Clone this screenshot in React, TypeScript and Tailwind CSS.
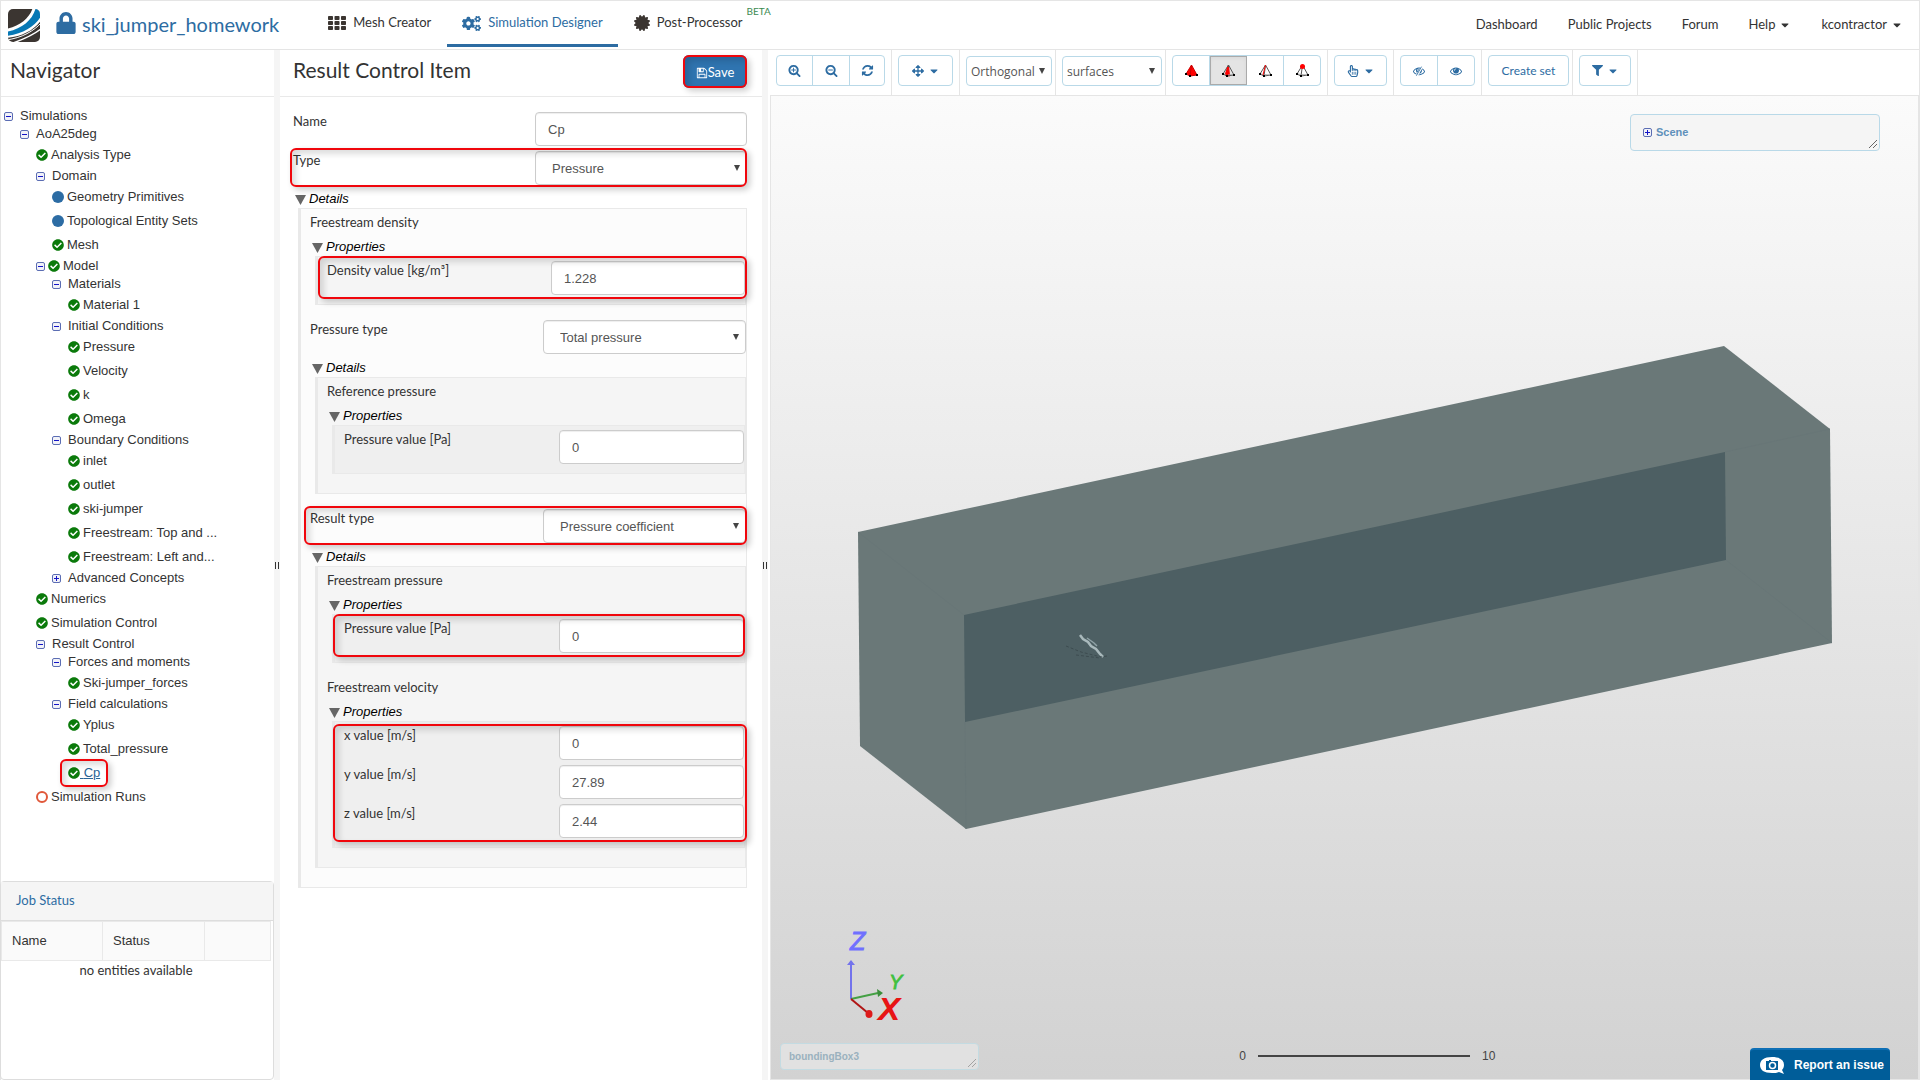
import type { ReactNode } from "react";
import { FaArrowsAlt, FaCaretDown, FaCertificate, FaCheckCircle, FaCogs, FaFilter, FaLock, FaRegHandPointer } from "react-icons/fa";

const paths = {
  plus: "M1088 800v64q0 13-9.5 22.5t-22.5 9.5h-224v224q0 13-9.5 22.5t-22.5 9.5h-64q-13 0-22.5-9.5t-9.5-22.5v-224h-224q-13 0-22.5-9.5t-9.5-22.5v-64q0-13 9.5-22.5t22.5-9.5h224v-224q0-13 9.5-22.5t22.5-9.5h64q13 0 22.5 9.5t9.5 22.5v224h224q13 0 22.5 9.5t9.5 22.5z",
  minus: "M1088 800v64q0 13-9.5 22.5t-22.5 9.5h-576q-13 0-22.5-9.5t-9.5-22.5v-64q0-13 9.5-22.5t22.5-9.5h576q13 0 22.5 9.5t9.5 22.5z",
  lens: "M1216 832q0-185-131.5-316.5t-316.5-131.5-316.5 131.5-131.5 316.5 131.5 316.5 316.5 131.5 316.5-131.5 131.5-316.5zm512 832q0 53-37.5 90.5t-90.5 37.5q-54 0-90-38l-343-342q-179 124-399 124-143 0-273.5-55.5t-225-150-150-225-55.5-273.5 55.5-273.5 150-225 225-150 273.5-55.5 273.5 55.5 225 150 150 225 55.5 273.5q0 220-124 399l343 343q37 37 37 90z",
  refresh: "M1639 1056q0 5-1 7-64 268-268 434.5t-478 166.5q-146 0-282.5-55t-243.5-157l-129 129q-19 19-45 19t-45-19-19-45v-448q0-26 19-45t45-19h448q26 0 45 19t19 45-19 45l-137 137q71 66 161 102t187 36q134 0 250-65t186-179q11-17 53-117 8-23 30-23h192q13 0 22.5 9.5t9.5 22.5zm25-800v448q0 26-19 45t-45 19h-448q-26 0-45-19t-19-45 19-45l138-138q-148-137-349-137-134 0-250 65t-186 179q-11 17-53 117-8 23-30 23h-199q-13 0-22.5-9.5t-9.5-22.5v-7q65-268 270-434.5t480-166.5q146 0 284 55.5t245 156.5l130-129q19-19 45-19t45 19 19 45z",
  save: "M512 1536h768v-384h-768v384zm896 0h128v-896q0-14-10-38.5t-20-34.5l-281-281q-10-10-34-20t-39-10v416q0 40-28 68t-68 28h-576q-40 0-68-28t-28-68v-416h-128v1280h128v-416q0-40 28-68t68-28h832q40 0 68 28t28 68v416zm-384-928v-320q0-13-9.5-22.5t-22.5-9.5h-192q-13 0-22.5 9.5t-9.5 22.5v320q0 13 9.5 22.5t22.5 9.5h192q13 0 22.5-9.5t9.5-22.5zm640 32v928q0 40-28 68t-68 28h-1344q-40 0-68-28t-28-68v-1344q0-40 28-68t68-28h928q40 0 88 20t76 48l280 280q28 28 48 76t20 88z",
  eye: "M1664 960q-152-236-381-353 61 104 61 225 0 185-131.5 316.5t-316.5 131.5-316.5-131.5-131.5-316.5q0-121 61-225-229 117-381 353 133 205 333.5 326.5t434.5 121.5 434.5-121.5 333.5-326.5zm-720-384q0-20-14-34t-34-14q-125 0-214.5 89.5t-89.5 214.5q0 20 14 34t34 14 34-14 14-34q0-86 61-147t147-61q20 0 34-14t14-34zm848 384q0 34-20 69-140 230-376.5 368.5t-499.5 138.5-499.5-139-376.5-368q-20-35-20-69t20-69q140-229 376.5-368t499.5-139 499.5 139 376.5 368q20 35 20 69z",
};

function Glyph({ d, size = 13, children }: { d: string; size?: number; children?: ReactNode }) {
  return (
    <svg viewBox="0 0 1792 1792" width={size} height={size} fill="currentColor" aria-hidden="true">
      <path d={d} />
      {children}
    </svg>
  );
}

function GridIcon() {
  return (
    <svg viewBox="0 0 18 14" width="18" height="14" fill="#3b3531" aria-hidden="true">
      {[0, 5, 10].map((y) => [0, 6.5, 13].map((x) => <rect key={`${x}-${y}`} x={x} y={y} width="5" height="4" rx="0.8" />))}
    </svg>
  );
}

function Logo() {
  return (
    <svg viewBox="0 0 32 33" className="h-[33px] w-8" aria-hidden="true">
      <clipPath id="logo-clip"><rect width="32" height="33" rx="5" /></clipPath>
      <g clipPath="url(#logo-clip)" fill="none">
        <rect width="32" height="33" fill="#3b3531" />
        <path d="M25 -2C22 9 12 17 -2 20L-2 29C14 28 27 21 34 10V-2Z" fill="#fff" />
        <path d="M28 -2C25 11 14 20 -2 23V27C16 25 29 16 34 5V-2Z" fill="#0778b5" />
        <path d="M34 19C27 25 16 30 5 34" stroke="#fff" strokeWidth="1.500" />
        <path d="M34 13C26 22 14 29 -2 31" stroke="#fff" strokeWidth="1" />
      </g>
    </svg>
  );
}

type Status = "ok" | "blue" | "open";

function StatusIcon({ status }: { status: Status }) {
  if (status === "ok") return <FaCheckCircle size={12} className="text-[#0b7a0b]" />;
  if (status === "blue") return <span className="size-3 rounded-full bg-[#2c6ca4]" />;
  return <span className="size-3 rounded-full border-2 border-[#e0583a]" />;
}

function Toggle({ open = true }: { open?: boolean }) {
  return (
    <svg viewBox="0 0 9 9" width="9" height="9" className="shrink-0" aria-hidden="true">
      <rect x="0.5" y="0.5" width="8" height="8" rx="1.5" fill="#f1f2f8" stroke="#5b6db3" />
      <path d={open ? "M2 4.5h5" : "M2 4.5h5M4.5 2v5"} stroke="#1414c8" />
    </svg>
  );
}

interface TreeNode {
  label: string;
  status?: Status;
  children?: TreeNode[];
  closed?: boolean;
  active?: boolean;
}

const ok = (label: string): TreeNode => ({ label, status: "ok" });

const tree: TreeNode[] = [
  {
    label: "Simulations",
    children: [
      {
        label: "AoA25deg",
        children: [
          ok("Analysis Type"),
          {
            label: "Domain",
            children: [
              { label: "Geometry Primitives", status: "blue" },
              { label: "Topological Entity Sets", status: "blue" },
              ok("Mesh"),
            ],
          },
          {
            label: "Model",
            status: "ok",
            children: [
              { label: "Materials", children: [ok("Material 1")] },
              { label: "Initial Conditions", children: [ok("Pressure"), ok("Velocity"), ok("k"), ok("Omega")] },
              {
                label: "Boundary Conditions",
                children: [ok("inlet"), ok("outlet"), ok("ski-jumper"), ok("Freestream: Top and ..."), ok("Freestream: Left and...")],
              },
              { label: "Advanced Concepts", closed: true, children: [] },
            ],
          },
          ok("Numerics"),
          ok("Simulation Control"),
          {
            label: "Result Control",
            children: [
              { label: "Forces and moments", children: [ok("Ski-jumper_forces")] },
              { label: "Field calculations", children: [ok("Yplus"), ok("Total_pressure"), { label: "Cp", status: "ok", active: true }] },
            ],
          },
          { label: "Simulation Runs", status: "open" },
        ],
      },
    ],
  },
];

function Tree({ nodes, root }: { nodes: TreeNode[]; root?: boolean }) {
  return (
    <ul className={root ? "pl-[3px]" : "pl-4"}>
      {nodes.map((node) => (
        <li key={node.label}>
          {node.children ? (
            <div className="flex h-[18px] items-center">
              <button type="button" aria-label={`Toggle ${node.label}`} className="flex"><Toggle open={!node.closed} /></button>
              {node.status ? (
                <span className="mr-[3px] ml-[3px] flex"><StatusIcon status={node.status} /></span>
              ) : (
                <span className="w-[7px]" />
              )}
              <a href="#">{node.label}</a>
            </div>
          ) : (
            <div className="flex h-6 items-center">
              <div className="relative flex items-center">
                <StatusIcon status={node.status!} />
                <a href="#" className={node.active ? "whitespace-pre text-[#2a6496] underline" : "pl-[3px]"}>{node.active ? " " : ""}{node.label}</a>
                {node.active && <Highlight className="-inset-x-2 -inset-y-1" />}
              </div>
            </div>
          )}
          {node.children && node.children.length > 0 && <Tree nodes={node.children} />}
        </li>
      ))}
    </ul>
  );
}

function Highlight({ className }: { className: string }) {
  return (
    <span
      className={`pointer-events-none absolute z-10 rounded-md border-2 border-[#f0060c] shadow-[3px_3px_6px_rgba(0,0,0,0.2),inset_4px_4px_6px_rgba(0,0,0,0.14)] ${className}`}
    />
  );
}

function Row({ id, label, children }: { id: string; label: string; children: ReactNode }) {
  return (
    <div className="relative mb-[5px] flex h-[34px] justify-between">
      <label htmlFor={id} className="leading-[18px]">{label}</label>
      <div className="relative w-[calc(50%-15px)]">{children}</div>
    </div>
  );
}

const control = "h-[34px] w-full rounded border border-[#ccc] bg-white font-['Liberation_Sans',sans-serif] text-[13px] text-[#555] shadow-[inset_0_1px_1px_rgba(0,0,0,0.07)]";

function TextRow({ id, label, value }: { id: string; label: string; value: string }) {
  return (
    <Row id={id} label={label}>
      <input id={id} defaultValue={value} className={`${control} px-3`} />
    </Row>
  );
}

function SelectRow({ id, label, value }: { id: string; label: string; value: string }) {
  return (
    <Row id={id} label={label}>
      <select id={id} className={`${control} appearance-none px-4 pt-0.5`}>
        <option>{value}</option>
      </select>
      <Arrow />
    </Row>
  );
}

function Arrow() {
  return (
    <svg viewBox="0 0 6 6" className="pointer-events-none absolute top-1/2 right-[7px] size-1.5 -translate-y-1/2" aria-hidden="true">
      <path d="M0 0h6L3 6z" fill="#444" />
    </svg>
  );
}

function Section({ title, tone, children }: { title: string; tone: string; children: ReactNode }) {
  return (
    <section className="mb-[15px]">
      <h3 className="flex items-center pl-0.5 font-['Liberation_Sans',sans-serif] leading-[18px] text-black italic">
        <svg viewBox="0 0 11 10" className="mt-0.5 mr-[3px] h-2.5 w-[11px]" aria-hidden="true"><path d="M0 0h11L5.500 10z" fill="#666" /></svg>
        {title}
      </h3>
      <div className={`ml-[5px] border border-l-[3px] border-[#e9e9e9] py-1 pl-[9px] ${tone}`}>{children}</div>
    </section>
  );
}

function GroupLabel({ children }: { children: ReactNode }) {
  return <p className="pb-[7px] leading-[18px]">{children}</p>;
}

function Splitter() {
  return <div className="flex w-1.5 shrink-0 items-center justify-center bg-[#f5f5f5]"><span className="h-[7px] w-1 border-x border-[#333]" /></div>;
}

function Tetra({ variant }: { variant: "volume" | "face" | "edge" | "node" }) {
  return (
    <svg viewBox="0 0 13 13" width="13" height="13" fill="none" aria-hidden="true">
      {variant === "volume" && <path d="M6.500 1L12 11L5 12L1 10Z" fill="#f00" />}
      {variant === "face" && <path d="M6.500 1L7.500 12L3 11Z" fill="#f00" stroke="#f00" />}
      <path d="M6.500 1L12 11L5 12L1 10ZM6.500 1L5 12" stroke={variant === "volume" ? "#c00" : "#555"} strokeWidth="1" />
      {variant !== "volume" && <path d="M1 10L12 11" stroke="#999" strokeWidth="0.700" />}
      {variant === "face" && <path d="M6 3L5 11" stroke="#f00" strokeWidth="2" />}
      {variant === "edge" && <path d="M6.500 1L4 11" stroke="#f00" />}
      {variant === "node" && <circle cx="6.500" cy="2.500" r="2.500" fill="#f00" />}
      <path d="M0 9h2v2H0zM4 11h2v2H4zM11 10h2v2h-2z" fill="#000" />
    </svg>
  );
}

function ToolCell({ children, tight }: { children: ReactNode; tight?: boolean }) {
  return <div className={`border-r border-[#e5e5e5] pt-[5px] pl-1.5 ${tight ? "pr-[3px]" : "pr-1.5"}`}>{children}</div>;
}

function ToolGroup({ children }: { children: ReactNode }) {
  return <div className="flex h-[31px] divide-x divide-[#b9d9e8] overflow-hidden rounded border border-[#b9d9e8] text-[#2d6ca2]">{children}</div>;
}

function Tool({ label, width, children, pressed }: { label: string; width: string; children: ReactNode; pressed?: boolean }) {
  return (
    <button type="button" aria-label={label} className={`flex items-center justify-center gap-1 ${width} ${pressed ? "bg-[#e4e4e4] inset-shadow-sm outline -outline-offset-1 outline-[#aaa]" : ""}`}>
      {children}
    </button>
  );
}

function ToolSelect({ label, value, width }: { label: string; value: string; width: string }) {
  return (
    <div className={`relative mt-px ${width}`}>
      <select aria-label={label} className="h-[30px] w-full appearance-none rounded border border-[#b9d9e8] bg-white pt-0.5 pl-1 font-['Open_Sans',sans-serif] text-xs text-[#555]">
        <option>{value}</option>
      </select>
      <Arrow />
    </div>
  );
}

function Resizer({ className }: { className?: string }) {
  return (
    <svg viewBox="0 0 8 8" className={`absolute right-0.5 bottom-0.5 size-2 ${className ?? ""}`} aria-hidden="true">
      <path d="M0 8L8 0M4 8L8 4" stroke="#666" strokeWidth="1" />
    </svg>
  );
}

function Viewer() {
  return (
    <div className="relative min-h-[600px] flex-1 overflow-hidden border border-[#e5e5e5] bg-linear-to-b from-[#fbfbfb] to-[#d2d2d2] font-['Liberation_Sans',sans-serif]">
      <svg viewBox="771 96 1147 983" className="absolute inset-0 size-full" aria-hidden="true">
        <path d="M858 532L1724 346L1830 429L1832 643L966 829L860 746Z" fill="#6a7878" />
        <path d="M964 615L1725 452L1726 560L965 722Z" fill="#4d5f63" />
        <path d="M858 532L964 615M1725 452L1830 429M1726 560L1832 643M965 722L966 829" stroke="#687677" strokeWidth="1" />
        <path d="M1080 635l3 4 5 3 3 4 5 3 4 5 3 3" stroke="#a9b9bc" strokeWidth="2.500" fill="none" />
        <path d="M1087 638l7 5 3 3" stroke="#8fa2a6" strokeWidth="1.500" fill="none" />
        <path d="M1066 646l15 6 20 5 6-1M1076 655l24 3" stroke="#3d4c50" strokeDasharray="3 2" fill="none" />
      </svg>

      <div className="absolute top-[18px] right-[38px] flex h-[37px] w-[250px] items-center gap-1 rounded border border-[#b9d9e8] bg-[#f5f5f5] pl-3 text-[11px] font-bold text-[#5f90bb]">
        <button type="button" aria-label="Expand scene"><Toggle open={false} /></button>
        Scene
        <Resizer />
      </div>

      <svg viewBox="0 0 60 96" className="absolute bottom-[58px] left-[75px] h-24 w-[60px] overflow-visible" aria-hidden="true">
        <path d="M5 74V36" stroke="#7373ec" strokeWidth="2" />
        <path d="M5 35l4 5H1z" fill="#7373ec" />
        <path d="M5 74l27-6" stroke="#44a044" strokeWidth="2" />
        <path d="M31 64l6 4-5 4z" fill="#3b8f3b" />
        <path d="M5 74l17 14" stroke="#b01515" strokeWidth="2" />
        <ellipse cx="23" cy="89" rx="3.500" ry="4" fill="#dd1a1a" />
        <g className="italic" stroke="none">
          <text x="4" y="25" fontSize="25" fill="#7070ff" stroke="#7070ff" strokeWidth="1">Z</text>
          <text x="43" y="64" fontSize="20" fill="#3fc03f" stroke="#3fc03f" strokeWidth="0.800">Y</text>
          <text x="33" y="94" fontSize="30" fill="#e81414" stroke="#e81414" strokeWidth="1.800">X</text>
        </g>
      </svg>

      <div className="absolute bottom-[9px] left-[9px] flex h-[27px] w-[199px] items-center rounded border border-[#c3dbe2] bg-[#e1e1e1] pl-2 text-[10px] font-bold text-[#9ab1be]">
        boundingBox3
        <Resizer className="opacity-50" />
      </div>

      <div className="absolute bottom-[15px] left-[41%] -ml-0.5 flex items-center gap-3 text-xs text-[#444]">
        <span>0</span>
        <span className="h-0.5 w-[212px] bg-[#444]" />
        <span>10</span>
      </div>
    </div>
  );
}

export default function App() {
  return (
    <div className="relative flex min-h-screen flex-col border border-b-0 border-[#e5e5e5] bg-white font-['Lato',sans-serif] text-[13px] text-[#333]">
      <header className="flex h-[49px] items-stretch border-b border-[#e5e5e5] pr-4">
        <a href="#" aria-label="Home" className="flex items-center pl-[7px]"><Logo /></a>
        <h1 className="ml-[15px] flex items-center gap-[5px] pb-0.5 text-xl text-[#2d6ca2]">
          <FaLock size={22} className="mb-0.5" />
          ski_jumper_homework
        </h1>
        <nav className="ml-[33px] flex">
          <a href="#" className="flex items-center gap-[7px] px-4 pb-1"><GridIcon />Mesh Creator</a>
          <a href="#" className="relative flex items-center gap-[7px] px-[15px] pb-1 text-[#2d6ca2]">
            <FaCogs size={19} />Simulation Designer
            <span className="absolute inset-x-0 bottom-0.5 h-[3px] bg-[#2d6ca2]" />
          </a>
          <a href="#" className="relative flex items-center gap-[7px] px-4 pb-1">
            <FaCertificate size={16} className="text-[#3b3531]" />Post-Processor
            <sup className="absolute top-0.5 left-full -ml-3 text-[10px] leading-4 text-[#3c8a50]">BETA</sup>
          </a>
        </nav>
        <nav className="ml-auto flex items-center gap-[30px]">
          <a href="#">Dashboard</a>
          <a href="#">Public Projects</a>
          <a href="#">Forum</a>
          <button type="button" className="flex items-center gap-1">Help<FaCaretDown size={12} /></button>
          <button type="button" className="flex items-center gap-1">kcontractor<FaCaretDown size={12} /></button>
        </nav>
      </header>

      <div className="flex flex-1 items-stretch">
        <aside className="flex w-[273px] shrink-0 flex-col">
          <h2 className="flex h-[47px] items-center border-b border-[#e9e9e9] pb-1.5 pl-[9px] text-[21px]">Navigator</h2>
          <div className="pt-2.5 font-['Liberation_Sans',sans-serif]"><Tree nodes={tree} root /></div>
          <section className="mt-auto -ml-px min-h-[199px] rounded border border-[#ddd]">
            <h2 className="flex h-[39px] items-center border-b border-[#ddd] bg-[#f5f5f5] pl-[15px] text-[#2d6ca2]">Job Status</h2>
            <div className="pr-0.5">
              <table className="w-full table-fixed border-collapse font-['Liberation_Sans',sans-serif]">
                <thead>
                  <tr className="h-[39px] bg-[#fafafa] text-left">
                    <th className="w-[101px] border border-[#e9e9e9] pl-2.5 font-normal">Name</th>
                    <th className="w-[102px] border border-[#e9e9e9] pl-2.5 font-normal">Status</th>
                    <th className="border border-[#e9e9e9]" />
                  </tr>
                </thead>
                <tbody>
                  <tr><td colSpan={3} className="text-center font-['Lato',sans-serif] leading-[18px]">no entities available</td></tr>
                </tbody>
              </table>
            </div>
          </section>
        </aside>

        <Splitter />

        <main className="w-[482px] shrink-0">
          <div className="flex h-[47px] items-start justify-between border-b border-[#e9e9e9] pr-[15px] pl-[13px]">
            <h2 className="pt-1 text-[21px]">Result Control Item</h2>
            <button type="button" className="relative mt-[5px] flex h-[33px] w-16 items-center justify-center rounded-md bg-[#2f74b0] pt-0.5 text-white">
              <Glyph d={paths.save} size={12} />Save
              <Highlight className="inset-0" />
            </button>
          </div>

          <form className="pt-[15px] pr-[15px] pl-[13px]">
            <TextRow id="name" label="Name" value="Cp" />
            <div className="relative">
              <SelectRow id="type" label="Type" value="Pressure" />
              <Highlight className="-top-[3px] right-0 -bottom-0.5 -left-[3px]" />
            </div>
            <Section title="Details" tone="bg-[#fcfcfc]">
              <GroupLabel>Freestream density</GroupLabel>
              <Section title="Properties" tone="bg-[#f5f5f5]">
                <div className="relative">
                  <TextRow id="density" label="Density value [kg/m³]" value="1.228" />
                  <Highlight className="-top-[5px] -right-0.5 -bottom-1 -left-[9px]" />
                </div>
              </Section>
              <SelectRow id="pressure-type" label="Pressure type" value="Total pressure" />
              <Section title="Details" tone="bg-[#f5f5f5]">
                <GroupLabel>Reference pressure</GroupLabel>
                <Section title="Properties" tone="bg-[#efefef]">
                  <TextRow id="reference-pressure" label="Pressure value [Pa]" value="0" />
                </Section>
              </Section>
              <div className="relative">
                <SelectRow id="result-type" label="Result type" value="Pressure coefficient" />
                <Highlight className="-top-[3px] -right-px -bottom-0.5 -left-1.5" />
              </div>
              <Section title="Details" tone="bg-[#f5f5f5]">
                <GroupLabel>Freestream pressure</GroupLabel>
                <Section title="Properties" tone="bg-[#efefef]">
                  <div className="relative">
                    <TextRow id="freestream-pressure" label="Pressure value [Pa]" value="0" />
                    <Highlight className="-top-[5px] -right-px -bottom-1 -left-[11px]" />
                  </div>
                </Section>
                <GroupLabel>Freestream velocity</GroupLabel>
                <Section title="Properties" tone="bg-[#efefef]">
                  <div className="relative">
                    <TextRow id="velocity-x" label="x value [m/s]" value="0" />
                    <TextRow id="velocity-y" label="y value [m/s]" value="27.89" />
                    <TextRow id="velocity-z" label="z value [m/s]" value="2.44" />
                    <Highlight className="-top-0.5 -right-[3px] -bottom-1 -left-[11px]" />
                  </div>
                </Section>
              </Section>
            </Section>
          </form>
        </main>

        <Splitter />

        <section className="ml-0.5 flex min-w-0 flex-1 flex-col">
          <div className="flex h-[45px]">
            <ToolCell>
              <ToolGroup>
                <Tool label="Zoom in" width="w-9"><Glyph d={paths.lens}><path d={paths.plus} /></Glyph></Tool>
                <Tool label="Zoom out" width="w-[37px]"><Glyph d={paths.lens}><path d={paths.minus} /></Glyph></Tool>
                <Tool label="Refresh" width="w-[34px]"><Glyph d={paths.refresh} /></Tool>
              </ToolGroup>
            </ToolCell>
            <ToolCell>
              <ToolGroup>
                <Tool label="Move" width="w-[53px]"><FaArrowsAlt size={12} /><FaCaretDown size={12} /></Tool>
              </ToolGroup>
            </ToolCell>
            <ToolCell tight><ToolSelect label="Projection" value="Orthogonal" width="w-[86px]" /></ToolCell>
            <ToolCell tight><ToolSelect label="Render mode" value="surfaces" width="w-[100px]" /></ToolCell>
            <ToolCell>
              <ToolGroup>
                <Tool label="Pick volumes" width="w-[37px]"><Tetra variant="volume" /></Tool>
                <Tool label="Pick faces" width="w-[37px]" pressed><Tetra variant="face" /></Tool>
                <Tool label="Pick edges" width="w-[37px]"><Tetra variant="edge" /></Tool>
                <Tool label="Pick nodes" width="w-9"><Tetra variant="node" /></Tool>
              </ToolGroup>
            </ToolCell>
            <ToolCell>
              <ToolGroup>
                <Tool label="Selection" width="w-[51px]"><FaRegHandPointer size={12} /><FaCaretDown size={12} /></Tool>
              </ToolGroup>
            </ToolCell>
            <ToolCell>
              <ToolGroup>
                <Tool label="Hide" width="w-[37px]">
                  <Glyph d={paths.eye} size={12}>
                    <path d="M1330 250L560 1600" stroke="#fff" strokeWidth="330" />
                    <path d="M1270 250L500 1600" stroke="currentColor" strokeWidth="130" />
                  </Glyph>
                </Tool>
                <Tool label="Show" width="w-9"><Glyph d={paths.eye} size={12} /></Tool>
              </ToolGroup>
            </ToolCell>
            <ToolCell tight>
              <ToolGroup>
                <button type="button" className="w-[79px] text-xs">Create set</button>
              </ToolGroup>
            </ToolCell>
            <ToolCell>
              <ToolGroup>
                <Tool label="Filter" width="w-[50px]"><FaFilter size={11} /><FaCaretDown size={12} /></Tool>
              </ToolGroup>
            </ToolCell>
          </div>
          <Viewer />
        </section>
      </div>

      <button type="button" className="absolute right-[29px] bottom-0 flex h-8 w-[140px] items-center gap-2.5 rounded-t-sm border-t-2 border-[#0e6fb5] bg-[#005d99] pl-2.5 font-['Liberation_Sans',sans-serif] text-xs font-bold text-white">
        <svg viewBox="0 0 24 17" className="h-[17px] w-6" aria-hidden="true">
          <path d="M12 0C4 0 0 3 0 8s4 8 12 8c3 0 5 0 7-1l5 2-2-4c1-1 2-3 2-5 0-5-4-8-12-8z" fill="#fff" />
          <path d="M6 4h3V3h2v1h7v9H6z" fill="#005d99" />
          <circle cx="12.500" cy="8.500" r="3" fill="none" stroke="#fff" strokeWidth="1.500" />
        </svg>
        Report an issue
      </button>
    </div>
  );
}
